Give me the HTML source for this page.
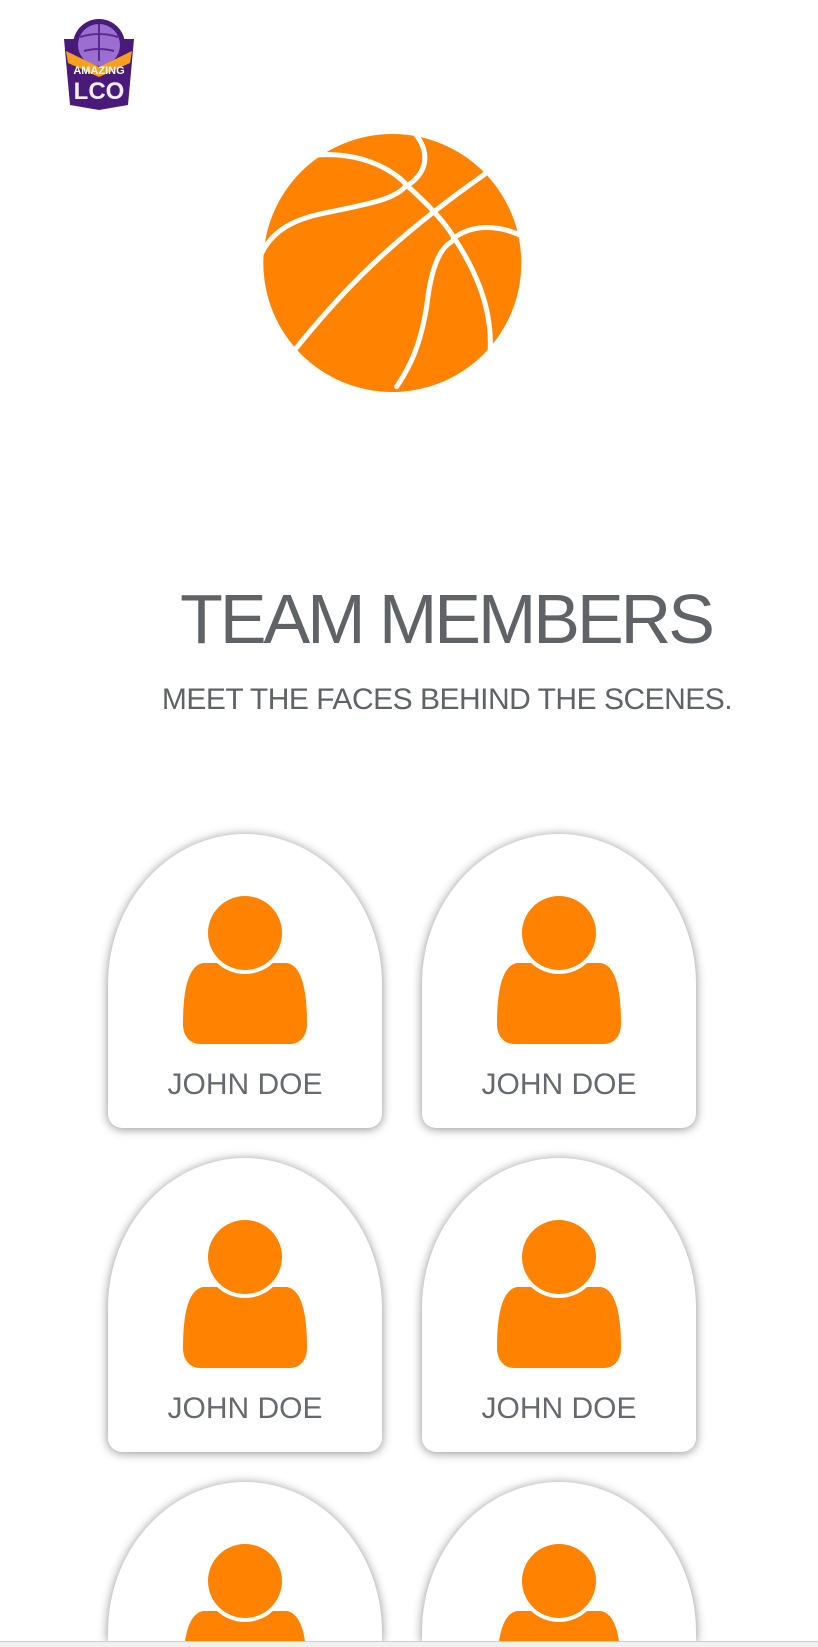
<!DOCTYPE html>
<html><head><meta charset="utf-8"><style>
html{margin:0;padding:0;width:818px;height:1647px;overflow:hidden;background:#fff;}
body{margin:0;padding:0;background:#fff;width:818px;height:1647px;position:relative;overflow:hidden;font-family:"Liberation Sans",Arial,sans-serif;}
.abs{position:absolute;}
.card{position:absolute;width:274px;height:294px;background:#fff;border-radius:137px 137px 14px 14px/150px 150px 14px 14px;box-shadow:0 1px 10px rgba(0,0,0,.45);}
.card svg{position:absolute;left:0;top:0;}
.card .n{position:absolute;left:0;width:274px;top:234px;text-align:center;font-size:30px;color:#666a6e;}
.title{left:0;width:892px;text-align:center;top:579px;font-size:70px;letter-spacing:-3px;color:#5f6366;}
.sub{left:0;width:894px;text-align:center;top:683px;font-size:30px;letter-spacing:-0.5px;color:#5f6366;}
.bar{left:0;top:1641px;width:818px;height:6px;background:#f1f1f1;border-top:1px solid #d0d0d0;}
</style></head><body>
<svg class="abs" style="left:60px;top:17px" width="78" height="94" viewBox="0 0 78 94">
 <path d="M4,22 L10,88 L39,93 L68,88 L74,22 Z" fill="#4a1a7a"/>
 <circle cx="39" cy="28" r="26" fill="#4a1a7a"/>
 <circle cx="39" cy="28" r="21" fill="#9b6fd1"/>
 <path d="M20,20 Q39,14 58,20 M24,34 Q39,30 54,34 M39,7 L39,44" stroke="#5b2a90" stroke-width="2" fill="none"/>
 <path d="M6,34 L39,50 L72,34 L70,46 L39,60 L8,46 Z" fill="#f5a020"/>
 <text x="39" y="57" text-anchor="middle" font-size="11" font-weight="bold" fill="#fff" font-family="Liberation Sans">AMAZING</text>
 <text x="39" y="82" text-anchor="middle" font-size="24" font-weight="bold" fill="#eee" font-family="Liberation Sans">LCO</text>
</svg>
<svg class="abs" style="left:240px;top:120px" width="290" height="280" viewBox="0 0 870 840">
 <circle cx="457" cy="429" r="387" fill="#ff8300"/>
 <g stroke="#fff" stroke-width="15" fill="none" stroke-linecap="round">
  <path d="M230,105 C380,95 470,160 500,195 C470,235 400,250 250,280 C150,300 90,340 60,410"/>
  <path d="M525,40 C565,90 570,150 505,195"/>
  <path d="M160,695 C300,520 450,360 745,155"/>
  <path d="M505,200 C560,250 610,300 640,350 C700,440 760,560 750,700"/>
  <path d="M640,355 C700,310 780,315 850,350"/>
  <path d="M635,365 C590,390 570,470 560,560 C540,680 510,740 470,800"/>
 </g>
</svg>
<div class="abs title">TEAM MEMBERS</div>
<div class="abs sub">MEET THE FACES BEHIND THE SCENES.</div>

<div class="card" style="left:108px;top:834px"><svg width="274" height="230"><path d="M95,129 L179,129 C195,132 199,160 199,190 C199,202 192,210 182,210 L92,210 C82,210 75,202 75,190 C75,160 79,132 95,129 Z" fill="#ff8300"/><circle cx="137" cy="99" r="41" fill="#fff"/><circle cx="137" cy="99" r="37" fill="#ff8300"/></svg><div class="n">JOHN DOE</div></div>
<div class="card" style="left:422px;top:834px"><svg width="274" height="230"><path d="M95,129 L179,129 C195,132 199,160 199,190 C199,202 192,210 182,210 L92,210 C82,210 75,202 75,190 C75,160 79,132 95,129 Z" fill="#ff8300"/><circle cx="137" cy="99" r="41" fill="#fff"/><circle cx="137" cy="99" r="37" fill="#ff8300"/></svg><div class="n">JOHN DOE</div></div>
<div class="card" style="left:108px;top:1158px"><svg width="274" height="230"><path d="M95,129 L179,129 C195,132 199,160 199,190 C199,202 192,210 182,210 L92,210 C82,210 75,202 75,190 C75,160 79,132 95,129 Z" fill="#ff8300"/><circle cx="137" cy="99" r="41" fill="#fff"/><circle cx="137" cy="99" r="37" fill="#ff8300"/></svg><div class="n">JOHN DOE</div></div>
<div class="card" style="left:422px;top:1158px"><svg width="274" height="230"><path d="M95,129 L179,129 C195,132 199,160 199,190 C199,202 192,210 182,210 L92,210 C82,210 75,202 75,190 C75,160 79,132 95,129 Z" fill="#ff8300"/><circle cx="137" cy="99" r="41" fill="#fff"/><circle cx="137" cy="99" r="37" fill="#ff8300"/></svg><div class="n">JOHN DOE</div></div>
<div class="card" style="left:108px;top:1482px;height:160px;border-radius:137px 137px 0 0/150px 150px 0 0"><svg width="274" height="160"><path d="M95,129 L179,129 C195,132 199,160 199,190 C199,202 192,210 182,210 L92,210 C82,210 75,202 75,190 C75,160 79,132 95,129 Z" fill="#ff8300"/><circle cx="137" cy="99" r="41" fill="#fff"/><circle cx="137" cy="99" r="37" fill="#ff8300"/></svg></div>
<div class="card" style="left:422px;top:1482px;height:160px;border-radius:137px 137px 0 0/150px 150px 0 0"><svg width="274" height="160"><path d="M95,129 L179,129 C195,132 199,160 199,190 C199,202 192,210 182,210 L92,210 C82,210 75,202 75,190 C75,160 79,132 95,129 Z" fill="#ff8300"/><circle cx="137" cy="99" r="41" fill="#fff"/><circle cx="137" cy="99" r="37" fill="#ff8300"/></svg></div>
<div class="abs bar"></div>
</body></html>
